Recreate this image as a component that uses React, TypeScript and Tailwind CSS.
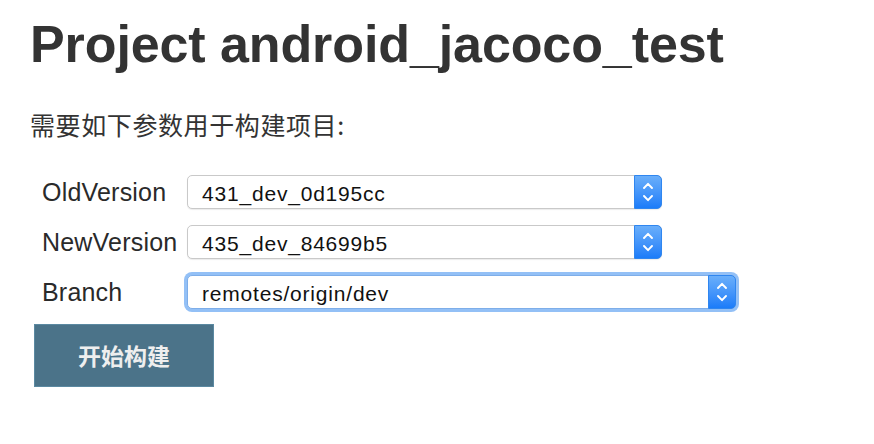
import React from 'react';

type SelectBoxProps = {
  value: string;
  width: string;
  focused?: boolean;
};

function Chevrons() {
  return (
    <svg width="10" height="20" viewBox="0 0 10 20" fill="none" stroke="white" strokeWidth="1.9" strokeLinecap="round" strokeLinejoin="round">
      <polyline points="1,6 5,1.8 9,6" />
      <polyline points="1,14 5,18.2 9,14" />
    </svg>
  );
}

function SelectBox({ value, width, focused }: SelectBoxProps) {
  return (
    <div
      className={`flex h-[34px] items-stretch rounded-[5px] border bg-white shadow-[0_1px_1px_rgba(0,0,0,0.08)] ${width} ${
        focused ? 'border-[#7eaee9] ring-[3px] ring-[#93c0f6]' : 'border-[#c9c9c9]'
      }`}
    >
      <span className="flex-1 overflow-hidden whitespace-nowrap pl-[14px] text-[21px] leading-[36px] tracking-[0.8px] text-[#111]">
        {value}
      </span>
      <div className="-my-px -mr-px flex w-[28px] items-center justify-center rounded-r-[5px] border border-[#2f86f0] bg-gradient-to-b from-[#69aefa] to-[#1a7cf9]">
        <Chevrons />
      </div>
    </div>
  );
}

const rows = [
  { label: 'OldVersion', value: '431_dev_0d195cc', width: 'w-[475px]', focused: false },
  { label: 'NewVersion', value: '435_dev_84699b5', width: 'w-[475px]', focused: false },
  { label: 'Branch', value: 'remotes/origin/dev', width: 'w-[549px]', focused: true },
];

export default function App() {
  return (
    <div className="min-h-screen bg-white pl-[30px] pt-[18px] font-['Liberation_Sans','Noto_Sans_CJK_SC',sans-serif] text-[#333]">
      <h1 className="text-[52px] font-bold leading-[52px] tracking-[-0.1px] text-[#333]">
        Project android_jacoco_test
      </h1>
      <p className="mt-[42px] font-['Noto_Sans_CJK_SC',sans-serif] text-[25px] leading-[25px] tracking-[0.6px] text-[#333]">
        需要如下参数用于构建项目:
      </p>

      <div className="mt-[38px] flex flex-col gap-[16px] pl-[12px]">
        {rows.map((row) => (
          <div key={row.label} className="flex h-[34px] items-center">
            <span className="w-[145px] text-[25px] leading-[34px] tracking-[0.2px] text-[#2a2a2a]">{row.label}</span>
            <SelectBox value={row.value} width={row.width} focused={row.focused} />
          </div>
        ))}
      </div>

      <button className="ml-[4px] mt-[15px] flex h-[63px] w-[180px] items-center justify-center border-[1.5px] border-[#5b89a1] bg-[#4b7389] font-['Noto_Sans_CJK_SC',sans-serif] text-[23px] font-bold text-[#eeeeee]">
        开始构建
      </button>
    </div>
  );
}
